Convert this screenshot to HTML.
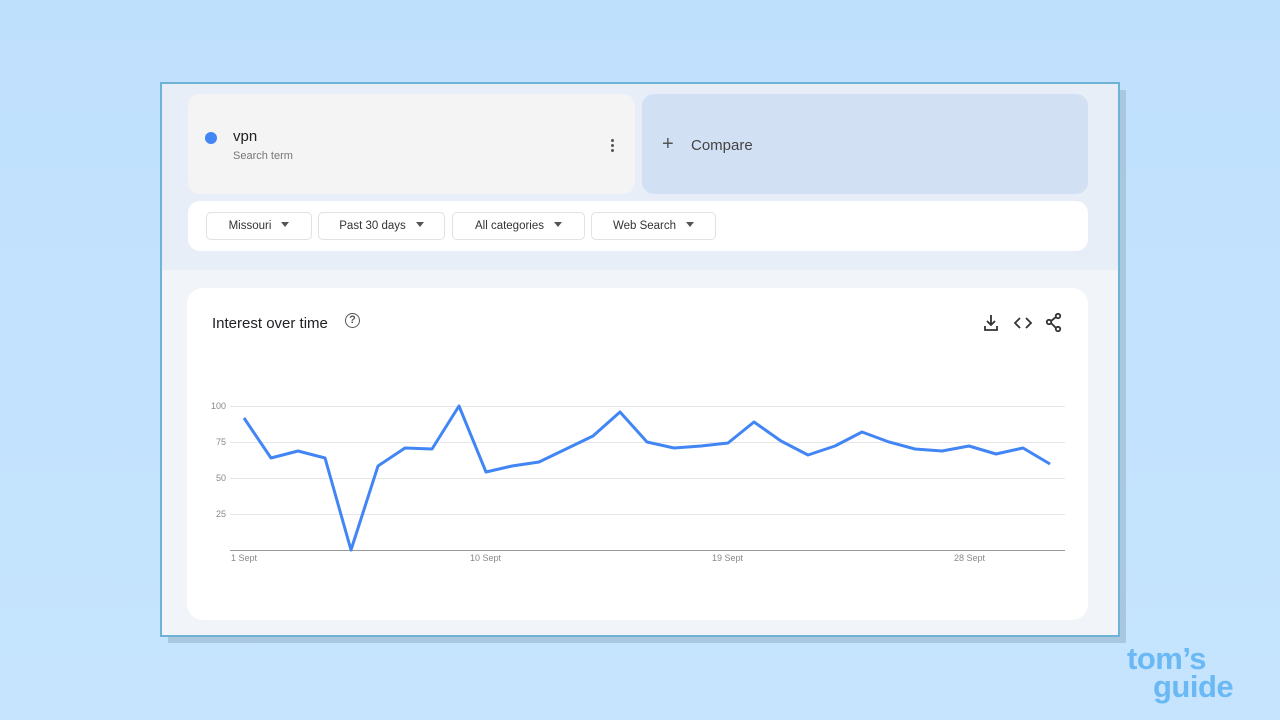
<!DOCTYPE html><html><head><style>
body{margin:0;width:1280px;height:720px;background:linear-gradient(180deg,#bfe0fd,#c6e4fd);font-family:"Liberation Sans",sans-serif;position:relative;overflow:hidden}
.sh{position:absolute;left:168px;top:90px;width:958px;height:553px;background:#a9c8e0}
.fr{position:absolute;left:160px;top:82px;width:956px;height:551px;border:2px solid #6eb3d6;background:#f1f4f9}
.top{position:absolute;left:0;top:0;width:956px;height:186px;background:#e8eef8}
.term{position:absolute;left:26px;top:10px;width:447px;height:100px;background:#f4f4f4;border-radius:12px}
.cmp{position:absolute;left:480px;top:10px;width:446px;height:100px;background:#d2e0f4;border-radius:12px}
.fil{position:absolute;left:26px;top:117px;width:900px;height:50px;background:#fff;border-radius:12px}
.b{position:absolute;top:11px;height:26px;border:1px solid #e2e2e2;border-radius:5px;font-size:11.5px;color:#333;line-height:26px;text-align:center}
.b i{display:inline-block;width:0;height:0;border-left:4.5px solid transparent;border-right:4.5px solid transparent;border-top:5px solid #555;margin-left:10px;vertical-align:2px}
.card{position:absolute;left:25px;top:204px;width:901px;height:332px;background:#fff;border-radius:16px}
</style></head><body>
<div class="sh"></div>
<div class="fr">
<div class="top">
<div class="term">
<div style="position:absolute;left:17px;top:38px;width:12px;height:12px;border-radius:50%;background:#4285f4"></div>
<div style="position:absolute;left:45px;top:34px;font-size:15px;color:#202124">vpn</div>
<div style="position:absolute;left:45px;top:56px;font-size:11px;color:#777">Search term</div>
<div style="position:absolute;left:423px;top:45px;width:3px;height:3px;background:#555;border-radius:50%;box-shadow:0 5px #555,0 10px #555"></div>
</div>
<div class="cmp"><div style="position:absolute;left:20px;top:40px;font-size:20px;color:#555;line-height:20px">+</div><div style="position:absolute;left:49px;top:43px;font-size:15px;color:#444">Compare</div></div>
<div class="fil">
<div class="b" style="left:18px;width:104px">Missouri<i></i></div>
<div class="b" style="left:130px;width:125px">Past 30 days<i></i></div>
<div class="b" style="left:264px;width:131px">All categories<i></i></div>
<div class="b" style="left:403px;width:123px">Web Search<i></i></div>
</div>
</div>
<div class="card">
<div style="position:absolute;left:25px;top:27px;font-size:15px;color:#202124">Interest over time</div>
<div style="position:absolute;left:158px;top:25px;width:13px;height:13px;border:1.5px solid #555;border-radius:50%;font-size:11px;line-height:13px;text-align:center;color:#555;font-weight:bold">?</div>
<svg style="position:absolute;left:790px;top:24px" width="90" height="22" fill="none" stroke="#333" stroke-width="1.8">
<path d="M14 3v10M10 9l4 4 4-4M8 14v4h12v-4"/>
<path d="M43 6l-5 5 5 5M49 6l5 5-5 5"/>
<circle cx="81" cy="4" r="2.2"/><circle cx="72" cy="10" r="2.2"/><circle cx="81" cy="17" r="2.2"/><path d="M74 9l5-4M74 11l5 5"/>
</svg>
</div>
</div>
<svg style="position:absolute;left:0;top:0" width="1280" height="720">
<g stroke="#e6e6e6" stroke-width="1"><path d="M230 406.5H1065M230 442.5H1065M230 478.5H1065M230 514.5H1065"/></g>
<path d="M230 550.5H1065" stroke="#999"/>
<g font-size="9" fill="#888" font-family="Liberation Sans"><text x="226" y="409" text-anchor="end">100</text><text x="226" y="445" text-anchor="end">75</text><text x="226" y="481" text-anchor="end">50</text><text x="226" y="517" text-anchor="end">25</text>
<text x="231" y="561">1 Sept</text><text x="470" y="561">10 Sept</text><text x="712" y="561">19 Sept</text><text x="954" y="561">28 Sept</text></g>
<polyline fill="none" stroke="#4285f4" stroke-width="3" stroke-linejoin="round" points="244,418 271,458 298,451 325,458 351,550 378,466 405,448 432,449 459,406 486,472 512,466 539,462 566,449 593,436 620,412 647,442 674,448 701,446 728,443 754,422 781,441 808,455 835,446 862,432 889,442 915,449 942,451 969,446 996,454 1023,448 1050,464"/>
</svg>
<div style="position:absolute;left:1127px;top:645px;font-family:'Liberation Sans',sans-serif;font-weight:bold;font-size:31px;line-height:28px;color:#6ab8f4;letter-spacing:-0.5px">tom’s<br><span style="margin-left:26px">guide</span></div>
</body></html>
